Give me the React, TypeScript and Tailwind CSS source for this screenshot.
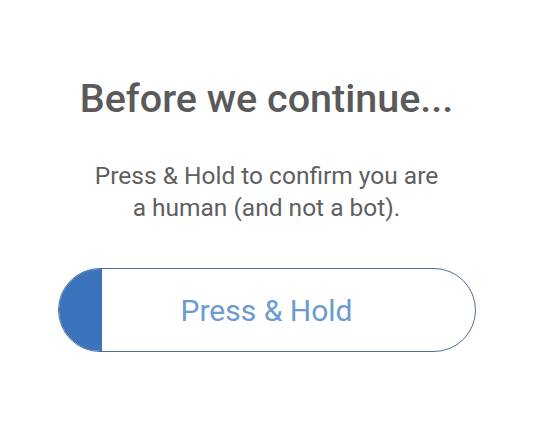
export default function App() {
  return (
    <div className="w-[533px] h-[432px] bg-white flex flex-col items-center" style={{ fontFamily: "Roboto, sans-serif" }}>
      <h1 className="mt-[75px] text-[39.5px] leading-[48px] font-medium text-[#5a5a5a]">Before we continue...</h1>
      <p className="mt-[37px] text-[24.5px] leading-[32px] text-[#5f5f5f] text-center">
        Press &amp; Hold to confirm you are
        <br />a human (and not a bot).
      </p>
      <div className="mt-[44px] w-[418px] h-[84px] rounded-full border-[1.5px] border-[#4c6e98] overflow-hidden relative flex items-center justify-center">
        <div className="absolute left-0 top-0 bottom-0 w-[43px] bg-[#3b74bd]" />
        <span className="text-[30px] text-[#6b9bcf]">Press &amp; Hold</span>
      </div>
    </div>
  );
}
